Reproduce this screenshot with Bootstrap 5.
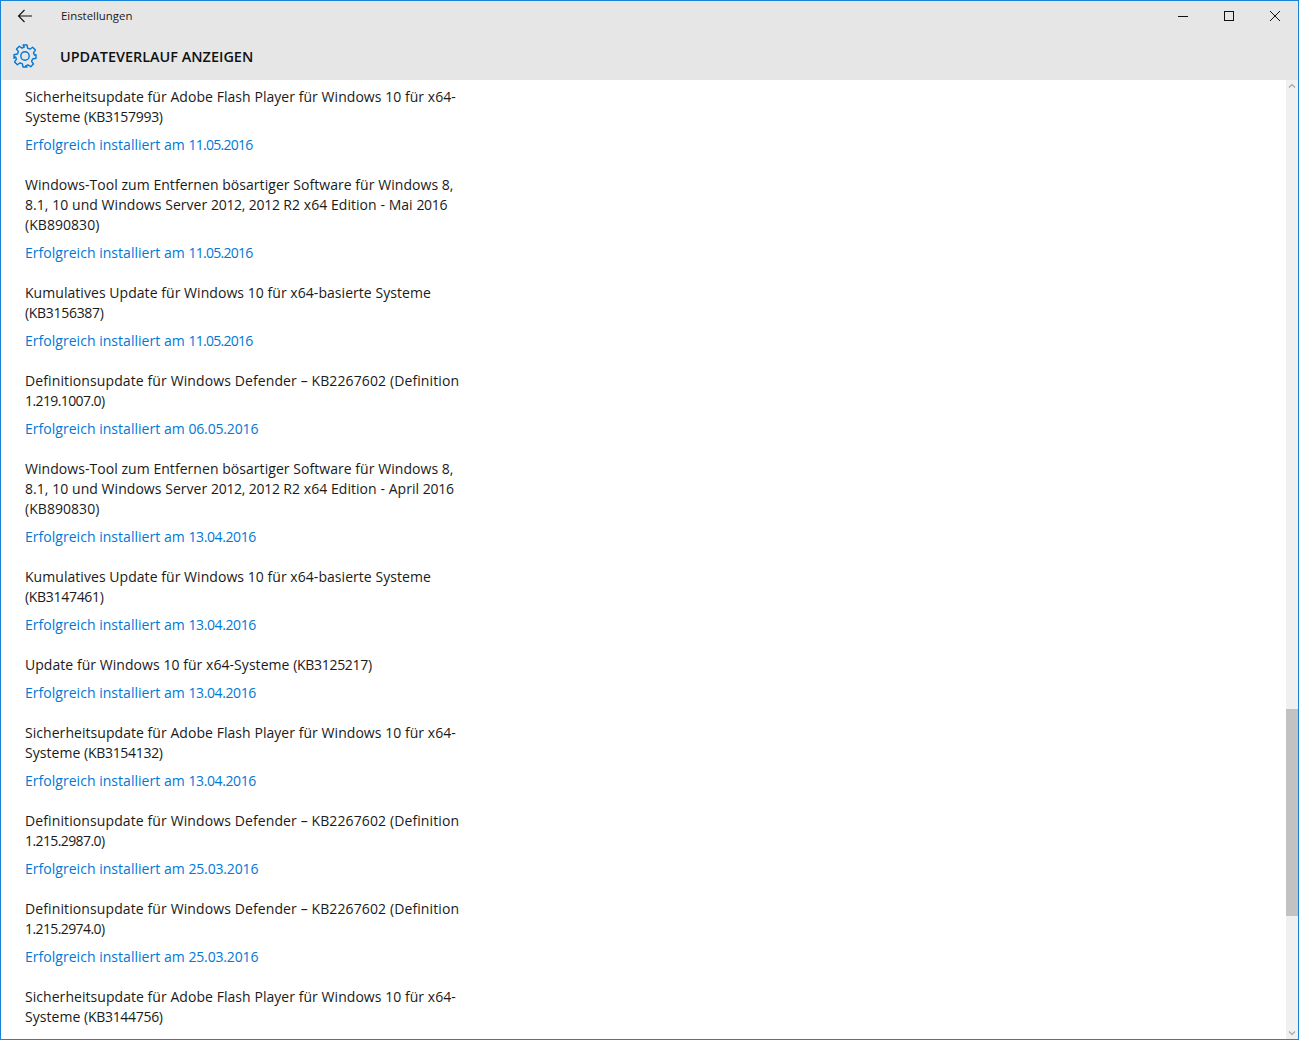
<!doctype html>
<html lang="de">
<head>
<meta charset="utf-8">
<title>Einstellungen</title>
<link href="https://cdn.jsdelivr.net/npm/bootstrap@5.3.0/dist/css/bootstrap.min.css" rel="stylesheet">
<style>
html,body{height:100%;margin:0;overflow:hidden;background:#fff}
body{font-family:"Open Sans","Noto Sans",sans-serif;color:#1a1a1a}
.win-frame{height:1040px;border:1px solid #1883d7;background:#fff}
.head-zone{background:#e6e6e6;height:79px;flex:none}
.top-strip{height:29px}
.back-btn{width:48px;padding-left:16px}
.app-name{font-size:11.4px;margin-left:12px;line-height:29px;color:#1a1a1a}
.win-ctl{width:46px}
.page-strip{height:50px;padding:2px 0 0 11px}
.page-title{font-size:14.45px;font-weight:600;margin:2px 0 0 22px;color:#111;line-height:46px}
.body-zone{min-height:0}
.entry-list{padding:7px 0 0 24px;overflow:hidden}
.entry{width:445px;margin-bottom:20px}
.entry-name{font-size:14px;line-height:20px;margin-bottom:8px;color:#1a1a1a;letter-spacing:.05px}
.name-wide{letter-spacing:.11px}
.entry-state{font-size:14px;line-height:20px;color:#0078d7;letter-spacing:.03px}
.num-run{letter-spacing:-.3px}
.ver-run{letter-spacing:-.6px}
.dt-a{letter-spacing:-.72px}
.dt-b{letter-spacing:-.38px}
.dt-c{letter-spacing:-.15px}
.sb-track{width:12px;background:#f0f0f0}
.sb-arrow{height:12px;flex:none}
.sb-gap-top{height:617px;flex:none}
.sb-thumb{height:207px;background:#c2c2c2;flex:none}
</style>
</head>
<body>
<div class="win-frame d-flex flex-column">
  <header class="head-zone">
    <div class="top-strip d-flex align-items-center">
      <div class="back-btn d-flex align-items-center">
        <svg width="16" height="14" viewBox="0 0 16 14" fill="none" stroke="#111" stroke-width="1.1"><path d="M1.500 7H15M7.500 1 1.500 7l6 6"/></svg>
      </div>
      <div class="app-name flex-grow-1">Einstellungen</div>
      <div class="win-ctl d-flex justify-content-center"><svg width="12" height="12" viewBox="0 0 12 12" stroke="#111" stroke-width="1"><path d="M1 6.500h10"/></svg></div>
      <div class="win-ctl d-flex justify-content-center"><svg width="12" height="12" viewBox="0 0 12 12" fill="none" stroke="#111" stroke-width="1"><rect x="1.500" y="1.500" width="9" height="9"/></svg></div>
      <div class="win-ctl d-flex justify-content-center"><svg width="12" height="12" viewBox="0 0 12 12" stroke="#111" stroke-width="1"><path d="M1 1l10 10M11 1 1 11"/></svg></div>
    </div>
    <div class="page-strip d-flex align-items-center">
      <svg width="26" height="26" viewBox="0 0 26 26" fill="none" stroke="#0078d7" stroke-width="1.400" stroke-linejoin="round"><path d="M11 2h4l.6 3.200 2.300 1 2.700-1.900 2.800 2.800-1.900 2.700 1 2.300L24 11.700v3.600l-3.400.7-1 2.300 1.900 2.700-2.800 2.800-2.700-1.900-2.300 1L15 24h-4l-.6-3.200-2.300-1-2.700 1.900-2.800-2.800 1.900-2.700-1-2.300L2 15.300v-3.600l3.400-.7 1-2.300L4.500 6l2.800-2.800 2.700 1.900 2.300-1z"/><circle cx="13" cy="13" r="4.200"/></svg>
      <div class="page-title">UPDATEVERLAUF ANZEIGEN</div>
    </div>
  </header>
  <div class="body-zone d-flex flex-grow-1">
    <main class="entry-list flex-grow-1">
      <div class="entry"><div class="entry-name">Sicherheitsupdate für Adobe Flash Player für Windows 10 für x64-<br>Systeme <span class="num-run">(KB3157993)</span></div><div class="entry-state">Erfolgreich installiert am <span class="dt-a">11.05.2016</span></div></div>
      <div class="entry"><div class="entry-name">Windows-Tool zum Entfernen bösartiger Software für Windows 8,<br>8.1, 10 und Windows Server <span class="num-run">2012,</span> <span class="num-run">2012</span> R2 x64 Edition - Mai <span class="num-run">2016</span><br>(KB890830)</div><div class="entry-state">Erfolgreich installiert am <span class="dt-a">11.05.2016</span></div></div>
      <div class="entry"><div class="entry-name">Kumulatives Update für Windows 10 für x64-basierte Systeme<br><span class="num-run">(KB3156387)</span></div><div class="entry-state">Erfolgreich installiert am <span class="dt-a">11.05.2016</span></div></div>
      <div class="entry"><div class="entry-name name-wide">Definitionsupdate für Windows Defender – KB2267602 (Definition<br><span class="ver-run">1.219.1007.0)</span></div><div class="entry-state">Erfolgreich installiert am <span class="dt-c">06.05.2016</span></div></div>
      <div class="entry"><div class="entry-name">Windows-Tool zum Entfernen bösartiger Software für Windows 8,<br>8.1, 10 und Windows Server <span class="num-run">2012,</span> <span class="num-run">2012</span> R2 x64 Edition - April <span class="num-run">2016</span><br>(KB890830)</div><div class="entry-state">Erfolgreich installiert am <span class="dt-b">13.04.2016</span></div></div>
      <div class="entry"><div class="entry-name">Kumulatives Update für Windows 10 für x64-basierte Systeme<br><span class="num-run">(KB3147461)</span></div><div class="entry-state">Erfolgreich installiert am <span class="dt-b">13.04.2016</span></div></div>
      <div class="entry"><div class="entry-name">Update für Windows 10 für x64-Systeme <span class="num-run">(KB3125217)</span></div><div class="entry-state">Erfolgreich installiert am <span class="dt-b">13.04.2016</span></div></div>
      <div class="entry"><div class="entry-name">Sicherheitsupdate für Adobe Flash Player für Windows 10 für x64-<br>Systeme <span class="num-run">(KB3154132)</span></div><div class="entry-state">Erfolgreich installiert am <span class="dt-b">13.04.2016</span></div></div>
      <div class="entry"><div class="entry-name name-wide">Definitionsupdate für Windows Defender – KB2267602 (Definition<br><span class="ver-run">1.215.2987.0)</span></div><div class="entry-state">Erfolgreich installiert am <span class="dt-c">25.03.2016</span></div></div>
      <div class="entry"><div class="entry-name name-wide">Definitionsupdate für Windows Defender – KB2267602 (Definition<br><span class="ver-run">1.215.2974.0)</span></div><div class="entry-state">Erfolgreich installiert am <span class="dt-c">25.03.2016</span></div></div>
      <div class="entry"><div class="entry-name">Sicherheitsupdate für Adobe Flash Player für Windows 10 für x64-<br>Systeme <span class="num-run">(KB3144756)</span></div></div>
    </main>
    <aside class="sb-track d-flex flex-column">
      <div class="sb-arrow d-flex align-items-center justify-content-center"><svg width="8" height="6" viewBox="0 0 8 6" fill="none" stroke="#a6a6a6" stroke-width="1.200"><path d="M1 4.500 4 1.500l3 3"/></svg></div>
      <div class="sb-gap-top"></div>
      <div class="sb-thumb"></div>
      <div class="flex-grow-1"></div>
      <div class="sb-arrow d-flex align-items-center justify-content-center"><svg width="8" height="6" viewBox="0 0 8 6" fill="none" stroke="#a6a6a6" stroke-width="1.200"><path d="M1 1.500l3 3 3-3"/></svg></div>
    </aside>
  </div>
</div>
<script src="https://cdn.jsdelivr.net/npm/bootstrap@5.3.0/dist/js/bootstrap.bundle.min.js"></script>
</body>
</html>
